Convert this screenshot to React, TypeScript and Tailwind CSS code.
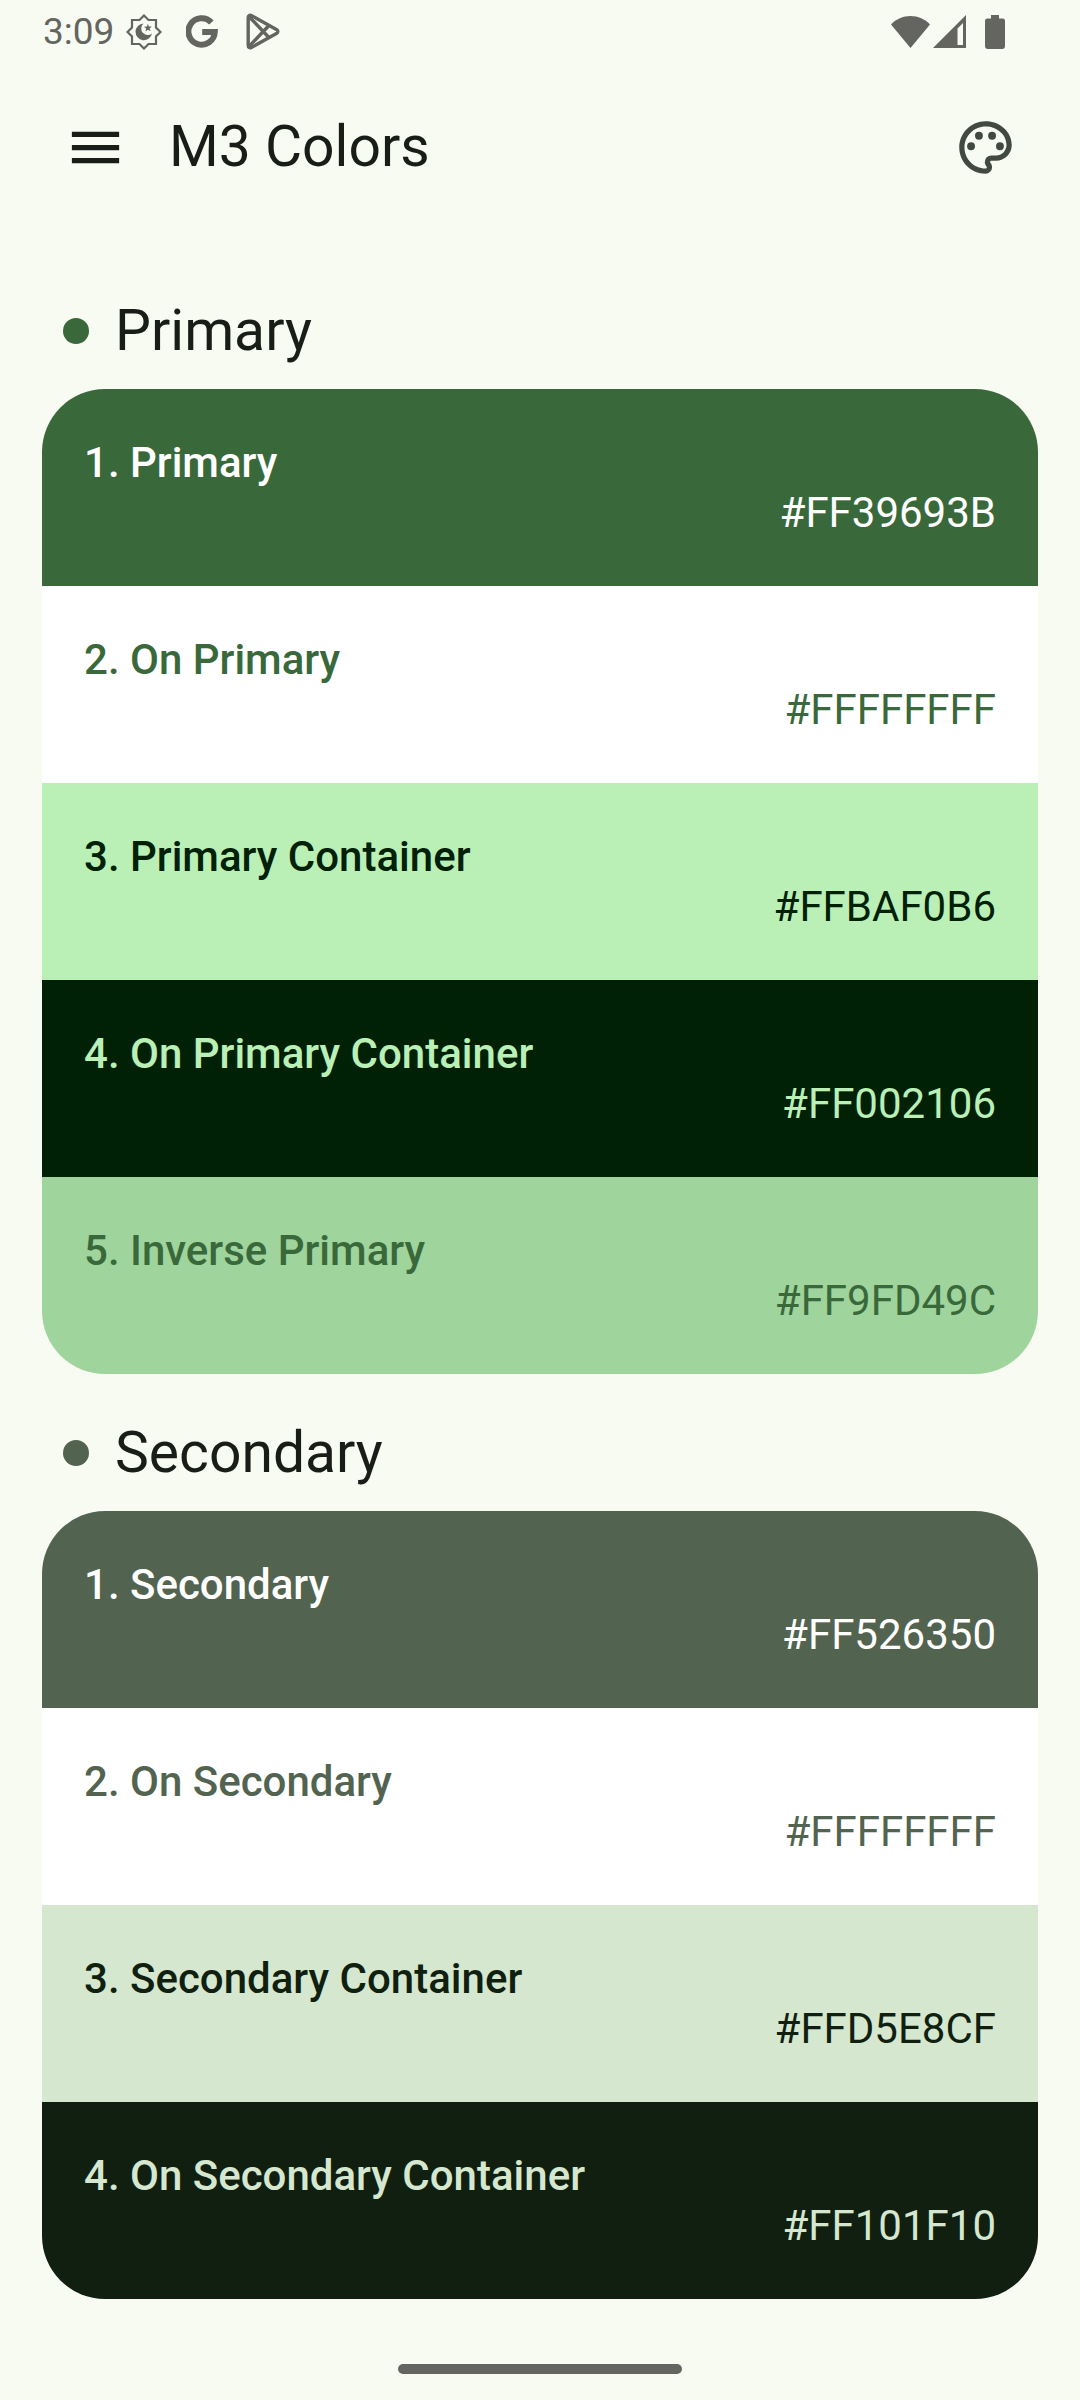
import React from "react";
import { MdMenu, MdOutlinePalette } from "react-icons/md";

type Swatch = { name: string; hex: string; tone: string };
type Group = { title: string; dot: string; swatches: Swatch[] };

const groups: Group[] = [
  {
    title: "Primary",
    dot: "bg-[#39693b]",
    swatches: [
      { name: "Primary", hex: "#FF39693B", tone: "bg-[#39693b] text-white" },
      { name: "On Primary", hex: "#FFFFFFFF", tone: "bg-white text-[#39693b]" },
      { name: "Primary Container", hex: "#FFBAF0B6", tone: "bg-[#baf0b6] text-[#002106]" },
      { name: "On Primary Container", hex: "#FF002106", tone: "bg-[#002106] text-[#baf0b6]" },
      { name: "Inverse Primary", hex: "#FF9FD49C", tone: "bg-[#9fd49c] text-[#39693b]" },
    ],
  },
  {
    title: "Secondary",
    dot: "bg-[#526350]",
    swatches: [
      { name: "Secondary", hex: "#FF526350", tone: "bg-[#526350] text-white" },
      { name: "On Secondary", hex: "#FFFFFFFF", tone: "bg-white text-[#526350]" },
      { name: "Secondary Container", hex: "#FFD5E8CF", tone: "bg-[#d5e8cf] text-[#101f10]" },
      { name: "On Secondary Container", hex: "#FF101F10", tone: "bg-[#101f10] text-[#d5e8cf]" },
    ],
  },
];

function PrayerIcon() {
  return (
    <svg width="36" height="36" viewBox="0 0 36 36" aria-hidden="true">
      <path
        d="M18 1.5L22.5 6H30V13.5L34.5 18L30 22.5V30H22.5L18 34.5L13.5 30H6V22.5L1.5 18L6 13.5V6H13.5Z"
        fill="none"
        stroke="currentColor"
        strokeWidth="2.2"
      />
      <path d="M17.5 9.6A8.3 8.3 0 1 0 26 19.5A6.4 6.4 0 0 1 17.5 9.6Z" fill="currentColor" />
      <path
        d="M21.9 9.8L22.9 12.5L25.8 12.5L23.6 14.4L24.6 17.2L22 15.7L19.5 17.4L20.2 14.5L18 12.7L20.9 12.5Z"
        fill="currentColor"
      />
    </svg>
  );
}

function GoogleIcon() {
  return (
    <svg width="32" height="34" viewBox="0 0 32 34" aria-hidden="true">
      <path
        d="M25.4 7.6A13.2 13.2 0 1 0 28.8 17H16.2"
        fill="none"
        stroke="currentColor"
        strokeWidth="6"
      />
    </svg>
  );
}

function PlayIcon() {
  return (
    <svg width="34" height="37" viewBox="0 0 34 37" aria-hidden="true">
      <g fill="none" stroke="currentColor" strokeWidth="3.4">
        <path d="M2.2 4.5c0-2 1.6-2.8 3.2-1.9L30.4 16.4c2 1.2 2 3 0 4.2L5.4 34.4c-1.6.9-3.2.1-3.2-1.9z" />
        <path d="M3 3.5L23.4 25M3 33.5L23.4 12" />
      </g>
    </svg>
  );
}

function StatusBar() {
  return (
    <div className="flex h-[63px] items-center justify-between pr-[75px] pl-[43px] text-[#646561]">
      <div className="flex items-center">
        <span className="text-[37px] leading-[40px]">3:09</span>
        <span className="ml-3 flex items-center gap-6">
          <PrayerIcon />
          <GoogleIcon />
          <span className="ml-1">
            <PlayIcon />
          </span>
        </span>
      </div>
      <div className="flex items-center">
        <svg width="39" height="34" viewBox="0 0 39 34" aria-hidden="true">
          <path d="M19.5 33L0 9.5C5 4 12 1 19.5 1S34 4 39 9.5Z" fill="currentColor" />
        </svg>
        <svg className="ml-[3px]" width="33" height="34" viewBox="0 0 33 34" aria-hidden="true">
          <path
            d="M33 0V33H0ZM30 8L24.5 13.5V30H30Z"
            fill="currentColor"
            fillRule="evenodd"
          />
        </svg>
        <svg className="ml-[19px]" width="20" height="34" viewBox="0 0 20 34" aria-hidden="true">
          <path
            d="M6 0H14V3.4H17.6Q20 3.4 20 5.8V31.6Q20 34 17.6 34H2.4Q0 34 0 31.6V5.8Q0 3.4 2.4 3.4H6Z"
            fill="currentColor"
          />
        </svg>
      </div>
    </div>
  );
}

function SwatchGroup({ group }: { group: Group }) {
  return (
    <section>
      <div className="mb-[22px] flex items-center gap-[26px] px-[21px]">
        <span className={"size-[26px] rounded-full " + group.dot} />
        <h2 className="text-[57px] leading-[72px]">{group.title}</h2>
      </div>
      <ol className="overflow-hidden rounded-[63px]">
        {group.swatches.map((s, i) => (
          <li key={s.name} className={"px-[42px] pt-[49px] pb-[48px] text-[42px] leading-[50px] " + s.tone}>
            <p className="font-medium">
              {i + 1}. {s.name}
            </p>
            <p className="text-right">{s.hex}</p>
          </li>
        ))}
      </ol>
    </section>
  );
}

export default function App() {
  return (
    <div className="flex min-h-screen flex-col bg-[#f8fbf2] font-['Roboto',sans-serif] text-[#191d17]">
      <StatusBar />
      <header className="flex h-[168px] items-center pr-[63px] pl-16">
        <button type="button" aria-label="Open menu">
          <MdMenu size={63} />
        </button>
        <h1 className="ml-[42px] flex-1 text-[57px] leading-[72px]">M3 Colors</h1>
        <button type="button" aria-label="Change palette" className="text-[#424940]">
          <MdOutlinePalette size={63} />
        </button>
      </header>
      <main className="flex flex-1 flex-col gap-[43px] px-[42px] pt-16">
        {groups.map((g) => (
          <SwatchGroup key={g.title} group={g} />
        ))}
      </main>
      <div className="flex justify-center pt-[26px] pb-[26px]">
        <div className="h-[10px] w-[284px] rounded-full bg-[#646561]" />
      </div>
    </div>
  );
}
